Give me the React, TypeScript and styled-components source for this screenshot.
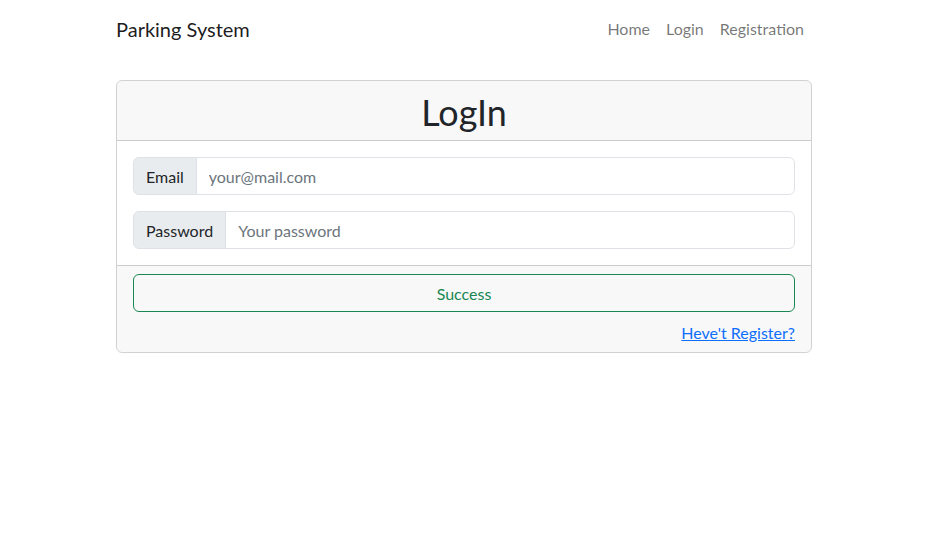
import React from "react";
import styled, { createGlobalStyle } from "styled-components";

const Global = createGlobalStyle`
  *, *::before, *::after { box-sizing: border-box; }
  body {
    margin: 0;
    font-family: Lato, "Open Sans", sans-serif;
    font-size: 16px;
    line-height: 1.5;
    color: #212529;
    background: #fff;
  }
`;

const Container = styled.div`
  max-width: 720px;
  margin: 0 auto;
  padding: 0 12px;
`;

const Navbar = styled.nav`
  padding: 8px 0;
`;

const NavInner = styled(Container)`
  display: flex;
  align-items: center;
  justify-content: space-between;
`;

const Brand = styled.a`
  font-size: 20px;
  line-height: 30px;
  padding: 6px 0 4px;
  color: rgba(0, 0, 0, 0.9);
  text-decoration: none;
`;

const NavList = styled.div`
  display: flex;
`;

const NavLink = styled.a`
  padding: 9px 8px 7px;
  color: rgba(0, 0, 0, 0.55);
  text-decoration: none;
  line-height: 24px;
`;

const Card = styled.div`
  margin-top: 24px;
  border: 1px solid rgba(0, 0, 0, 0.175);
  border-radius: 6px;
  overflow: hidden;
`;

const CardHeader = styled.div`
  padding: 10px 16px 6px;
  background: rgba(33, 37, 41, 0.03);
  border-bottom: 1px solid rgba(0, 0, 0, 0.175);
  text-align: center;
`;

const Title = styled.h1`
  margin: 0;
  font-size: 35.92px;
  font-weight: 400;
  line-height: 1.2;
`;

const CardBody = styled.div`
  padding: 16px;
  display: flex;
  flex-direction: column;
  gap: 16px;
`;

const InputGroup = styled.div`
  display: flex;
  width: 100%;
`;

const Addon = styled.span`
  padding: 7px 12px 5px;
  line-height: 24px;
  background: #e9ecef;
  border: 1px solid #dee2e6;
  border-radius: 6px 0 0 6px;
  white-space: nowrap;
`;

const Input = styled.input`
  flex: 1;
  min-width: 0;
  margin-left: -1px;
  padding: 7px 12px 5px;
  font: inherit;
  line-height: 24px;
  color: #212529;
  border: 1px solid #dee2e6;
  border-radius: 0 6px 6px 0;
  outline: none;
  &::placeholder { color: #6c757d; }
`;

const CardFooter = styled.div`
  padding: 8px 16px;
  background: rgba(33, 37, 41, 0.03);
  border-top: 1px solid rgba(0, 0, 0, 0.175);
  display: flex;
  flex-direction: column;
  gap: 8px;
`;

const Button = styled.button`
  width: 100%;
  padding: 7px 12px 5px;
  font: inherit;
  line-height: 24px;
  color: #198754;
  background: transparent;
  border: 1px solid #198754;
  border-radius: 6px;
`;

const LinkRow = styled.div`
  text-align: right;
  padding-top: 1px;
  margin-bottom: -1px;
`;

const Link = styled.a`
  color: #0d6efd;
  text-decoration: underline;
`;

export default function App() {
  return (
    <>
      <Global />
      <Navbar>
        <NavInner>
          <Brand href="#">Parking System</Brand>
          <NavList>
            <NavLink href="#">Home</NavLink>
            <NavLink href="#">Login</NavLink>
            <NavLink href="#">Registration</NavLink>
          </NavList>
        </NavInner>
      </Navbar>
      <Container>
        <Card>
          <CardHeader>
            <Title>LogIn</Title>
          </CardHeader>
          <CardBody>
            <InputGroup>
              <Addon>Email</Addon>
              <Input type="email" placeholder="your@mail.com" />
            </InputGroup>
            <InputGroup>
              <Addon>Password</Addon>
              <Input type="password" placeholder="Your password" />
            </InputGroup>
          </CardBody>
          <CardFooter>
            <Button>Success</Button>
            <LinkRow>
              <Link href="#">Heve't Register?</Link>
            </LinkRow>
          </CardFooter>
        </Card>
      </Container>
    </>
  );
}
